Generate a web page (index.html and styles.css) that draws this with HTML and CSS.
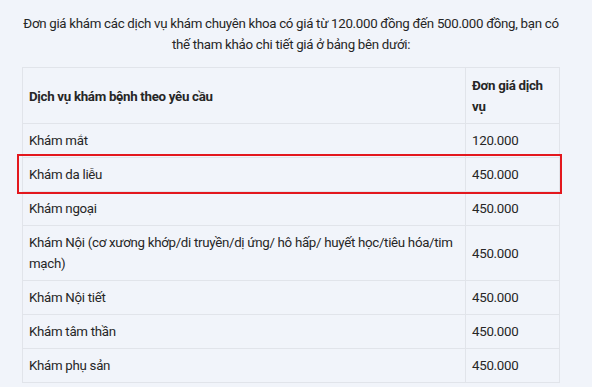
FILE: index.html
```html
<!DOCTYPE html>
<html lang="vi">
<head>
<meta charset="utf-8">
<link rel="stylesheet" href="styles.css">
</head>
<body>
<div class="page">
  <div class="content">
    <p class="intro">Đơn giá khám các dịch vụ khám chuyên khoa có giá từ 120.000 đồng đến 500.000 đồng, bạn có thế tham khảo chi tiết giá ở bảng bên dưới:</p>
    <table class="prices">
      <thead>
        <tr><th class="svc">Dịch vụ khám bệnh theo yêu cầu</th><th class="cost">Đơn giá dịch vụ</th></tr>
      </thead>
      <tbody>
        <tr><td>Khám mắt</td><td>120.000</td></tr>
        <tr><td>Khám da liễu</td><td>450.000</td></tr>
        <tr><td>Khám ngoại</td><td>450.000</td></tr>
        <tr><td>Khám Nội (cơ xương khớp/di truyền/dị ứng/ hô hấp/ huyết học/tiêu hóa/tim mạch)</td><td>450.000</td></tr>
        <tr><td>Khám Nội tiết</td><td>450.000</td></tr>
        <tr><td>Khám tâm thần</td><td>450.000</td></tr>
        <tr><td>Khám phụ sản</td><td>450.000</td></tr>
      </tbody>
    </table>
  </div>
  <div class="highlight"></div>
</div>
</body>
</html>
```
FILE: styles.css
```css
html, body {
  margin: 0;
  padding: 0;
  background: #ffffff;
}
body {
  width: 600px;
  height: 387px;
  overflow: hidden;
}
.page {
  position: relative;
  width: 592px;
  height: 387px;
  background: #f1f4fa;
  font-family: Roboto, "Noto Sans", sans-serif;
  font-size: 13.3px;
  letter-spacing: -0.3px;
  line-height: 21px;
  color: #262626;
}
.content {
  margin-left: 22px;
  width: 538px;
  padding-top: 13px;
}
.intro {
  margin: 0 0 12px;
  text-align: center;
}
.prices {
  width: 538px;
  border-collapse: collapse;
  border: 1px solid #e1e4ea;
}
.prices th, .prices td {
  border: 1px solid #e1e4ea;
  padding: 6px 6px;
  text-align: left;
  vertical-align: middle;
}
.prices th {
  font-weight: 700;
  padding: 7px 6px 6px;
}
.prices .svc { width: 431px; }
.prices .cost { width: 81px; }
.highlight {
  position: absolute;
  left: 17px;
  top: 154px;
  width: 541px;
  height: 36px;
  border: 2px solid #e3171d;
}
```
